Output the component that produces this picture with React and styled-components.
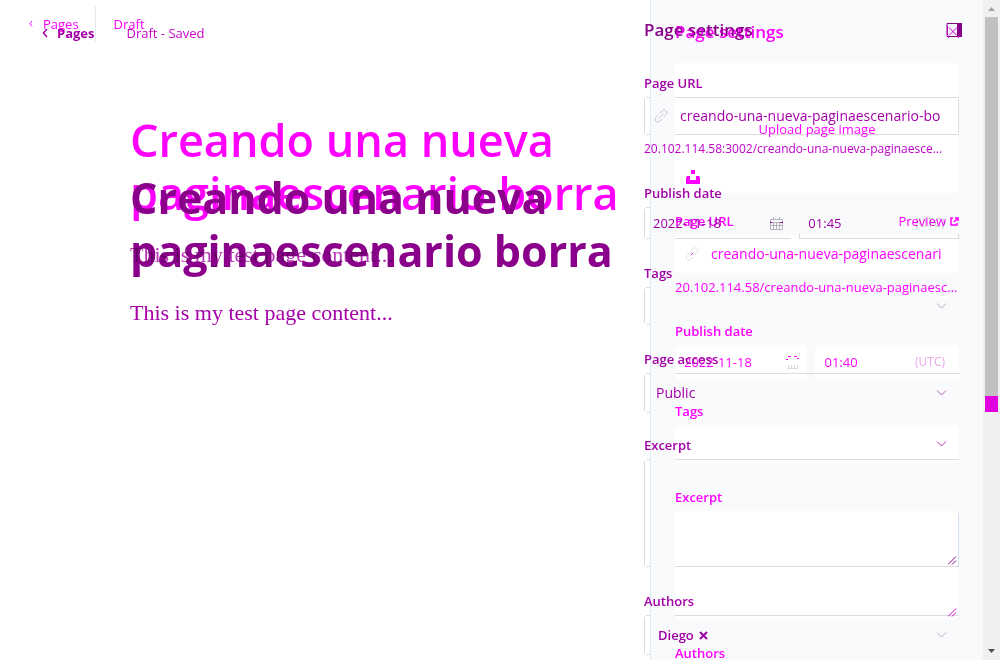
import React from "react";
import styled, { createGlobalStyle, css } from "styled-components";

const NEW = "#ff00ff";
const OLD = "#a400a8";
const DEEP = "#8b008b";

const Global = createGlobalStyle`
  * { box-sizing: border-box; }
  body { margin: 0; background: #fff; font-family: "Open Sans", "Noto Sans", sans-serif; font-size: 13px; line-height: 20px; overflow: hidden; }
  h1, h2, p { margin: 0; }
  input, select, textarea, button { font: inherit; color: inherit; margin: 0; padding: 0; border: 0; background: none; appearance: none; border-radius: 0; min-width: 0; outline: 0; }
  a { color: inherit; text-decoration: none; }
`;

const Stage = styled.div`
  display: grid;
  grid-template: 100% / minmax(0, 1fr) 17px;
  height: 100vh;
  overflow: hidden;
`;
const Layer = styled.div`
  grid-area: 1 / 1;
  display: grid;
  grid-template-columns: minmax(0, 1fr) ${(p) => p.$side};
  min-height: 0;
  overflow: hidden;
  color: ${(p) => p.$ink};
  mix-blend-mode: ${(p) => p.$blend || "normal"};
`;
const Main = styled.main`
  min-width: 0;
`;
const Bar = styled.header`
  display: flex;
  align-items: center;
  height: ${(p) => p.$h};
  padding-left: ${(p) => p.$left};
`;
const Back = styled.a`
  display: flex;
  align-items: center;
  gap: 8px;
  font-weight: ${(p) => p.$weight};
`;
const Status = styled.span`
  padding-left: ${(p) => p.$gap};
  color: ${(p) => p.$color};
`;
const Rule = styled.i`
  align-self: flex-start;
  width: 1px;
  height: 36px;
  margin-top: 6px;
  margin-left: 16px;
  background: #e3ebf2;
`;
const Article = styled.article`
  padding: ${(p) => p.$top} 24px 0 130px;
`;
const Title = styled.h1`
  max-width: 500px;
  font-size: ${(p) => p.$size};
  line-height: 53px;
  font-weight: ${(p) => p.$weight};
  color: ${(p) => p.$color};
`;
const Body = styled.p`
  margin-top: 20px;
  font-family: "Liberation Serif", serif;
  font-size: 22px;
  line-height: 32px;
  color: ${(p) => p.$color};
`;
const Panel = styled.aside`
  min-width: 0;
  height: 100vh;
  overflow: hidden;
  padding: ${(p) => p.$pad};
  ${(p) => p.$filled && css`
    background: #f9fafc;
    border-left: 1px solid #e3ebf2;
  `}
`;
const PanelHead = styled.div`
  display: flex;
  align-items: center;
  justify-content: space-between;
  height: ${(p) => p.$h};
  margin-bottom: ${(p) => p.$gap || "0"};
`;
const PanelTitle = styled.h2`
  font-size: 17px;
  line-height: 24px;
  font-weight: 600;
  color: ${(p) => p.$color};
`;
const IconButton = styled.button`
  display: flex;
  margin-right: -3px;
`;
const Label = styled.label`
  display: block;
  font-weight: 600;
`;
const Group = styled.div`
  height: ${(p) => p.$h};
`;
const Upload = styled.button`
  display: flex;
  flex-direction: column;
  gap: 31px;
  width: 100%;
  height: 130px;
  margin-bottom: 18px;
  padding: 0 11px 9px;
  justify-content: flex-end;
  background: #fff;
  border-radius: 4px;
  & > span { align-self: center; }
`;
const Spread = styled.div`
  display: flex;
  justify-content: space-between;
`;
const Pair = styled.div`
  display: grid;
  grid-template-columns: 12fr 13fr;
  gap: 8px;
`;

const line = "linear-gradient(#dcdcdc, #dcdcdc)";
const Frame = styled.div`
  display: flex;
  align-items: center;
  gap: 12px;
  min-width: 0;
  height: ${(p) => p.$h || "38px"};
  margin-top: 4px;
  padding: ${(p) => p.$pad || "0 12px"};
  & > input, & > select { flex: 1; width: 0; }
  & > svg { flex: none; }
  ${(p) => p.$white && css`
    background: #fff;
    border-radius: 4px;
  `}
  ${(p) => p.$edges && css`
    background-image: ${line}, ${line}, ${line}, ${line}, ${line}, ${line};
    background-repeat: no-repeat;
    background-position: 0 2px, 2px 0, 2px 100%, 100% 2px, 100% 0, 100% 100%;
    background-size:
      1px calc(100% - 4px),
      4px 1px,
      4px 1px,
      ${p.$edges.includes("right") ? "1px calc(100% - 4px)" : "0 0"},
      ${p.$edges.includes("top") ? "calc(100% - 31px) 1px" : "0 0"},
      ${p.$edges.includes("bottom") ? "calc(100% - 31px) 1px" : "0 0"};
  `}
  ${(p) => p.$foot && css`
    background-image: ${line}, ${line}, ${line};
    background-repeat: no-repeat;
    background-position: 0 100%, 100% 100%, 0 100%;
    background-size: 1px 5px, 1px 5px, 100% 1px;
  `}
  ${(p) => p.$side && css`
    background-image: linear-gradient(#d5e2ee, #d5e2ee);
    background-repeat: no-repeat;
    background-position: 100% 2px;
    background-size: 1px 54px;
  `}
`;
const Large = styled.input`
  font-size: 14px;
`;
const Choice = styled.select`
  font-size: 14px;
`;
const Help = styled.p`
  margin-top: 4px;
  font-size: ${(p) => p.$size};
  white-space: nowrap;
  color: ${(p) => p.$color};
`;
const Preview = styled.a`
  display: flex;
  align-items: center;
  gap: 4px;
`;
const Zone = styled.span`
  font-size: 12px;
  color: ${(p) => p.$color};
`;
const Area = styled.textarea`
  flex: 1;
  align-self: stretch;
  width: 0;
  resize: none;
`;
const Grip = styled.svg`
  align-self: flex-end;
`;
const Chip = styled.button`
  display: flex;
  align-items: center;
  gap: 5px;
  font-weight: 600;
`;
const Fill = styled.span`
  flex: 1;
`;
const Scroll = styled.div`
  grid-area: 1 / 2;
  display: flex;
  flex-direction: column;
  align-items: center;
  background: #f0f0f0;
  & > svg { flex: none; }
`;
const Thumb = styled.div`
  width: 13px;
  height: ${(p) => p.$h};
  background: ${(p) => p.$color};
`;

const Arrow = ({ up }) => (
  <svg width="17" height="17" viewBox="0 0 17 17"><path d={up ? "M5 11h7L8.500 7z" : "M5 6h7L8.500 10z"} fill={up ? "#a3a3a3" : "#505050"} /></svg>
);
const BackIcon = ({ small }) => (
  <svg width="7" height="10" viewBox="0 0 7 10" fill="none" stroke="currentColor" strokeWidth={small ? 1 : 1.5}>
    <path d={small ? "M4 2L2 4.500l2 3" : "M5 1L1.500 5L5 9"} />
  </svg>
);
const Chevron = ({ color }) => (
  <svg width="11" height="8" viewBox="0 0 11 8" fill="none" stroke={color}><path d="M1 1.500l4.500 4.500L10 1.500" /></svg>
);
const PanelIcon = () => (
  <svg width="16" height="15" viewBox="0 0 16 15">
    <path d="M1 .5h14v13H1z" fill="#f9fafc" stroke={DEEP} />
    <path d="M11 0h5v14h-5z" fill={DEEP} />
    <path d="M3 4.500l8 8M11 4.500l-8 8M2.500 13v2M12.500 13v2" fill="none" stroke="#e000e0" />
    <path d="M1.500 3v9" stroke="#c000c0" />
  </svg>
);
const Unsplash = () => (
  <svg width="14" height="14" viewBox="0 0 14 14" fill={NEW}><path d="M5 0h4v4H5zM1 6h3v4h6V6h3l1 2v6H0V8z" /></svg>
);
const LinkIcon = ({ faint }) => (
  <svg width="14" height="14" viewBox="0 0 14 14" fill="none" stroke={faint ? "#d8dce2" : "#c4c4c8"} strokeDasharray="3 1">
    <path d="M4.500 9.500l5-5M6 4l2-2.300a2.600 2.600 0 0 1 4 4L9.500 8M8 10l-2 2.300a2.600 2.600 0 0 1-4-4L4.500 6" />
    {faint && <path d="M6 8l2-2" stroke={NEW} />}
  </svg>
);
const Calendar = ({ faint }) => (
  <svg width="13" height="13" viewBox="0 0 13 13" fill="none" stroke={faint ? "#d8dce2" : "#b8b4ba"}>
    {faint
      ? <path d="M1 12.500h11M2.500 9v3M5.500 9v3M8.500 9v3M11.500 9v3" />
      : <path d="M.5 2.500h12v10H.5zM1 5.500h11M1 8.500h11M3.500 5v7M6.500 5v7M9.500 5v7M3.500 0v3M9.500 0v3" />}
    {faint && <path d="M2 .5h3M8 .5h3M0 3.500h2M11 2.500h2" stroke={NEW} />}
    {!faint && <path d="M0 5.500h2M10 5.500h3" stroke={OLD} />}
  </svg>
);
const External = () => (
  <svg width="9" height="9" viewBox="0 0 9 9" fill="none" stroke={NEW} strokeWidth="1.500"><path d="M3 1H1v7h6V6M5 1h3v3M8 1L4 5" /></svg>
);
const GripLines = ({ color }) => (
  <Grip width="9" height="9" viewBox="0 0 9 9" stroke={color}><path d="M0 8.500L8 .5M4 8.500L8 4.500" /></Grip>
);
const Cross = () => (
  <svg width="9" height="9" viewBox="0 0 9 9" stroke="currentColor" strokeWidth="2"><path d="M1 1l7 7M8 1L1 8" /></svg>
);

function Revised() {
  return (
    <Layer $side="333px" $ink={NEW}>
      <Main>
        <Bar $h="48px" $left="28px">
          <Back href="#pages" $weight={400}><BackIcon small />Pages</Back>
          <Rule />
          <Status $gap="18px" $color={NEW}>Draft</Status>
        </Bar>
        <Article $top="65px">
          <Title $size="45px" $weight={600} $color={NEW}>Creando una nueva paginaescenario borra</Title>
          <Body $color="#b838b8">This is my test page content...</Body>
        </Article>
      </Main>
      <Panel $filled $pad="0 24px">
        <PanelHead $h="63px"><PanelTitle $color={NEW}>Page settings</PanelTitle></PanelHead>
        <Upload type="button"><span>Upload page image</span><Unsplash /></Upload>
        <Group $h="110px">
          <Spread>
            <Label htmlFor="slug-b">Page URL</Label>
            <Preview href="#preview">Preview <External /></Preview>
          </Spread>
          <Frame $white $pad="0 10px"><LinkIcon faint /><Large id="slug-b" defaultValue="creando-una-nueva-paginaescenari" /></Frame>
          <Help $size="13px" $color={NEW}>20.102.114.58/creando-una-nueva-paginaesc...</Help>
        </Group>
        <Group $h="80px">
          <Label htmlFor="date-b">Publish date</Label>
          <Pair>
            <Frame $white $h="34px" $pad="0 8px 0 9px"><input id="date-b" defaultValue="2022-11-18" /><Calendar faint /></Frame>
            <Frame $white $h="34px" $pad="0 14px 0 9px"><input aria-label="Publish time" defaultValue="01:40" /><Zone $color="#e8a8e8">(UTC)</Zone></Frame>
          </Pair>
        </Group>
        <Group $h="86px">
          <Label htmlFor="tags-b">Tags</Label>
          <Frame $white><Choice id="tags-b"><option></option></Choice><Chevron color="#c030c0" /></Frame>
        </Group>
        <Group $h="156px">
          <Label htmlFor="excerpt-b">Excerpt</Label>
          <Frame $white $side $h="108px" $pad="2px"><Area id="excerpt-b" /><GripLines color="#d000d0" /></Frame>
        </Group>
        <Label as="p">Authors</Label>
      </Panel>
    </Layer>
  );
}

function Original() {
  return (
    <Layer $side="339px" $ink={OLD} $blend="multiply">
      <Main>
        <Bar $h="66px" $left="42px">
          <Back href="#pages" $weight={700}><BackIcon />Pages</Back>
          <Status $gap="32px" $color="#c800cc">Draft - Saved</Status>
        </Bar>
        <Article $top="105px">
          <Title $size="43px" $weight={700} $color={DEEP}>Creando una nueva paginaescenario borra</Title>
          <Body $color={OLD}>This is my test page content...</Body>
        </Article>
      </Main>
      <Panel $pad="0 24px 0 0">
        <PanelHead $h="60px" $gap="13px">
          <PanelTitle $color={DEEP}>Page settings</PanelTitle>
          <IconButton type="button" aria-label="Toggle settings"><PanelIcon /></IconButton>
        </PanelHead>
        <Group $h="110px">
          <Label htmlFor="slug-a">Page URL</Label>
          <Frame $edges="top bottom right" $pad="0 12px 0 10px"><LinkIcon /><Large id="slug-a" defaultValue="creando-una-nueva-paginaescenario-bo" /></Frame>
          <Help $size="12px" $color="#c000c8">20.102.114.58:3002/creando-una-nueva-paginaesce...</Help>
        </Group>
        <Group $h="80px">
          <Label htmlFor="date-a">Publish date</Label>
          <Pair>
            <Frame $edges="bottom" $h="32px" $pad="0 8px 0 9px"><input id="date-a" defaultValue="2022-11-18" /><Calendar /></Frame>
            <Frame $foot $h="32px" $pad="0 14px 0 9px"><input aria-label="Publish time" defaultValue="01:45" /><Zone $color="#d0d0d0">(UTC)</Zone></Frame>
          </Pair>
        </Group>
        <Group $h="86px">
          <Label htmlFor="tags-a">Tags</Label>
          <Frame $edges="left"><Choice id="tags-a"><option></option></Choice><Chevron color="#b8b0b8" /></Frame>
        </Group>
        <Group $h="86px">
          <Label htmlFor="access-a">Page access</Label>
          <Frame $edges="top" $h="40px"><Choice id="access-a"><option>Public</option></Choice><Chevron color="#b860b8" /></Frame>
        </Group>
        <Group $h="156px">
          <Label htmlFor="excerpt-a">Excerpt</Label>
          <Frame $edges="top bottom" $h="108px" $pad="2px"><Area id="excerpt-a" /><GripLines color={DEEP} /></Frame>
        </Group>
        <Label htmlFor="authors-a">Authors</Label>
        <Frame $edges="top" $h="40px" $pad="0 12px 0 14px"><Chip type="button">Diego <Cross /></Chip><input id="authors-a" /><Chevron color="#b8b0b8" /></Frame>
      </Panel>
    </Layer>
  );
}

export default function App() {
  return (
    <>
      <Global />
      <Stage>
        <Revised />
        <Original />
        <Scroll><Arrow up /><Thumb $h="379px" $color="#c1c1c1" /><Thumb $h="16px" $color="#e000e0" /><Fill /><Arrow /></Scroll>
      </Stage>
    </>
  );
}
